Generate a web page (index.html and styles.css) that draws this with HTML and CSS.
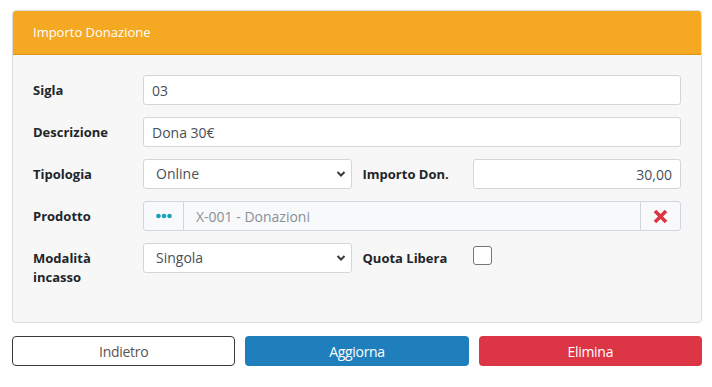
FILE: index.html
```html
<!DOCTYPE html>
<html lang="it">
<head>
    <meta charset="UTF-8">
    <meta name="viewport" content="width=device-width, initial-scale=1.0">
    <title>Importo Donazione</title>
    <link rel="stylesheet" href="styles.css">
</head>
<body>
    <div class="card">
        <div class="card-header">Importo Donazione</div>
        <div class="card-body">
            <div class="row">
                <label class="lbl">Sigla</label>
                <div class="ctl"><input type="text" class="field" value="03"></div>
            </div>
            <div class="row">
                <label class="lbl">Descrizione</label>
                <div class="ctl"><input type="text" class="field" value="Dona 30€"></div>
            </div>
            <div class="row">
                <label class="lbl">Tipologia</label>
                <div class="ctl sel">
                    <select class="field">
                        <option>Online</option>
                    </select>
                    <svg class="chev" width="10" height="8" viewBox="0 0 10 8"><path d="M1.5 2 L5 5.5 L8.5 2" fill="none" stroke="#343a40" stroke-width="2"/></svg>
                </div>
                <label class="lbl lbl2">Importo Don.</label>
                <div class="ctl"><input type="text" class="field num" value="30,00"></div>
            </div>
            <div class="row">
                <label class="lbl">Prodotto</label>
                <div class="ctl group">
                    <button class="addon dots">
                        <svg width="16" height="6" viewBox="0 0 16 6"><circle cx="2.5" cy="3" r="2.3" fill="#17a2b8"/><circle cx="8" cy="3" r="2.3" fill="#17a2b8"/><circle cx="13.5" cy="3" r="2.3" fill="#17a2b8"/></svg>
                    </button>
                    <input type="text" class="field ro" value="X-001 - Donazioni" readonly>
                    <button class="addon del">
                        <svg width="15" height="15" viewBox="0 0 15 15"><path d="M2 2 L13 13 M13 2 L2 13" stroke="#dc3545" stroke-width="3.6"/></svg>
                    </button>
                </div>
            </div>
            <div class="row last">
                <label class="lbl">Modalità incasso</label>
                <div class="ctl sel">
                    <select class="field">
                        <option>Singola</option>
                    </select>
                    <svg class="chev" width="10" height="8" viewBox="0 0 10 8"><path d="M1.5 2 L5 5.5 L8.5 2" fill="none" stroke="#343a40" stroke-width="2"/></svg>
                </div>
                <label class="lbl lbl2">Quota Libera</label>
                <div class="ctl check-wrap"><span class="check"></span></div>
            </div>
        </div>
    </div>

    <div class="actions">
        <button class="btn btn-back">Indietro</button>
        <button class="btn btn-update">Aggiorna</button>
        <button class="btn btn-delete">Elimina</button>
    </div>
</body>
</html>
```

FILE: styles.css
```css
body {
    margin: 0;
    padding: 10px 10px 0 12px;
    font-family: "Open Sans", Arial, sans-serif;
    background-color: #fff;
    color: #212529;
}
.card {
    border: 1px solid #dcdcdc;
    border-radius: 4px;
    background-color: #f7f7f7;
    overflow: hidden;
}
.card-header {
    background-color: #f5a822;
    border-bottom: 1px solid #de9414;
    color: #fff;
    font-size: 13px;
    height: 43px;
    line-height: 42px;
    padding: 0 20px;
}
.card-body {
    padding: 20px 20px 35px 20px;
}
.row {
    display: flex;
    align-items: flex-start;
    margin-bottom: 12px;
}
.row.last {
    margin-bottom: 0;
}
.lbl {
    box-sizing: border-box;
    width: 110px;
    flex: none;
    font-size: 13px;
    font-weight: 700;
    line-height: 19px;
    padding: 6px 15px 0 0;
    color: #212529;
}
.lbl2 {
    margin-left: 11px;
}
.ctl {
    flex: 1 1 0;
    min-width: 0;
    display: flex;
}
.field {
    box-sizing: border-box;
    width: 100%;
    min-width: 0;
    height: 30px;
    border: 1px solid #d3d6da;
    border-radius: 3px;
    background-color: #fff;
    padding: 0 8px;
    font-family: "Open Sans", Arial, sans-serif;
    font-size: 14px;
    color: #495057;
    outline: none;
}
.num {
    text-align: right;
}
.sel {
    position: relative;
}
.sel select {
    -webkit-appearance: none;
    appearance: none;
    padding-left: 12px;
    padding-bottom: 2px;
}
.chev {
    position: absolute;
    right: 6px;
    top: 11px;
}
.addon {
    width: 41px;
    height: 30px;
    flex: none;
    box-sizing: border-box;
    background-color: #f8f9fa;
    border: 1px solid #d3d6da;
    display: flex;
    align-items: center;
    justify-content: center;
    padding: 0;
}
.dots {
    border-radius: 3px 0 0 3px;
}
.del {
    border-radius: 0 3px 3px 0;
}
.group .field {
    flex: 1;
    border-radius: 0;
    border-left: none;
    border-right: none;
    background-color: #f8f9fa;
    color: #8a9097;
    padding-left: 12px;
}
.check-wrap {
    padding-top: 3px;
}
.check {
    display: block;
    width: 17px;
    height: 17px;
    border: 1px solid #767676;
    border-radius: 3px;
    background-color: #fff;
}
.actions {
    display: flex;
    gap: 10px;
    margin-top: 13px;
}
.btn {
    flex: 1 1 0;
    height: 30px;
    border-radius: 4px;
    font-family: "Open Sans", Arial, sans-serif;
    font-size: 14px;
    letter-spacing: -0.3px;
    border: 1px solid transparent;
}
.btn-back {
    background-color: #fff;
    border-color: #343a40;
    color: #5a5550;
}
.btn-update {
    background-color: #1f7fbd;
    color: #fff;
}
.btn-delete {
    background-color: #dc3545;
    color: #fff;
}
```
